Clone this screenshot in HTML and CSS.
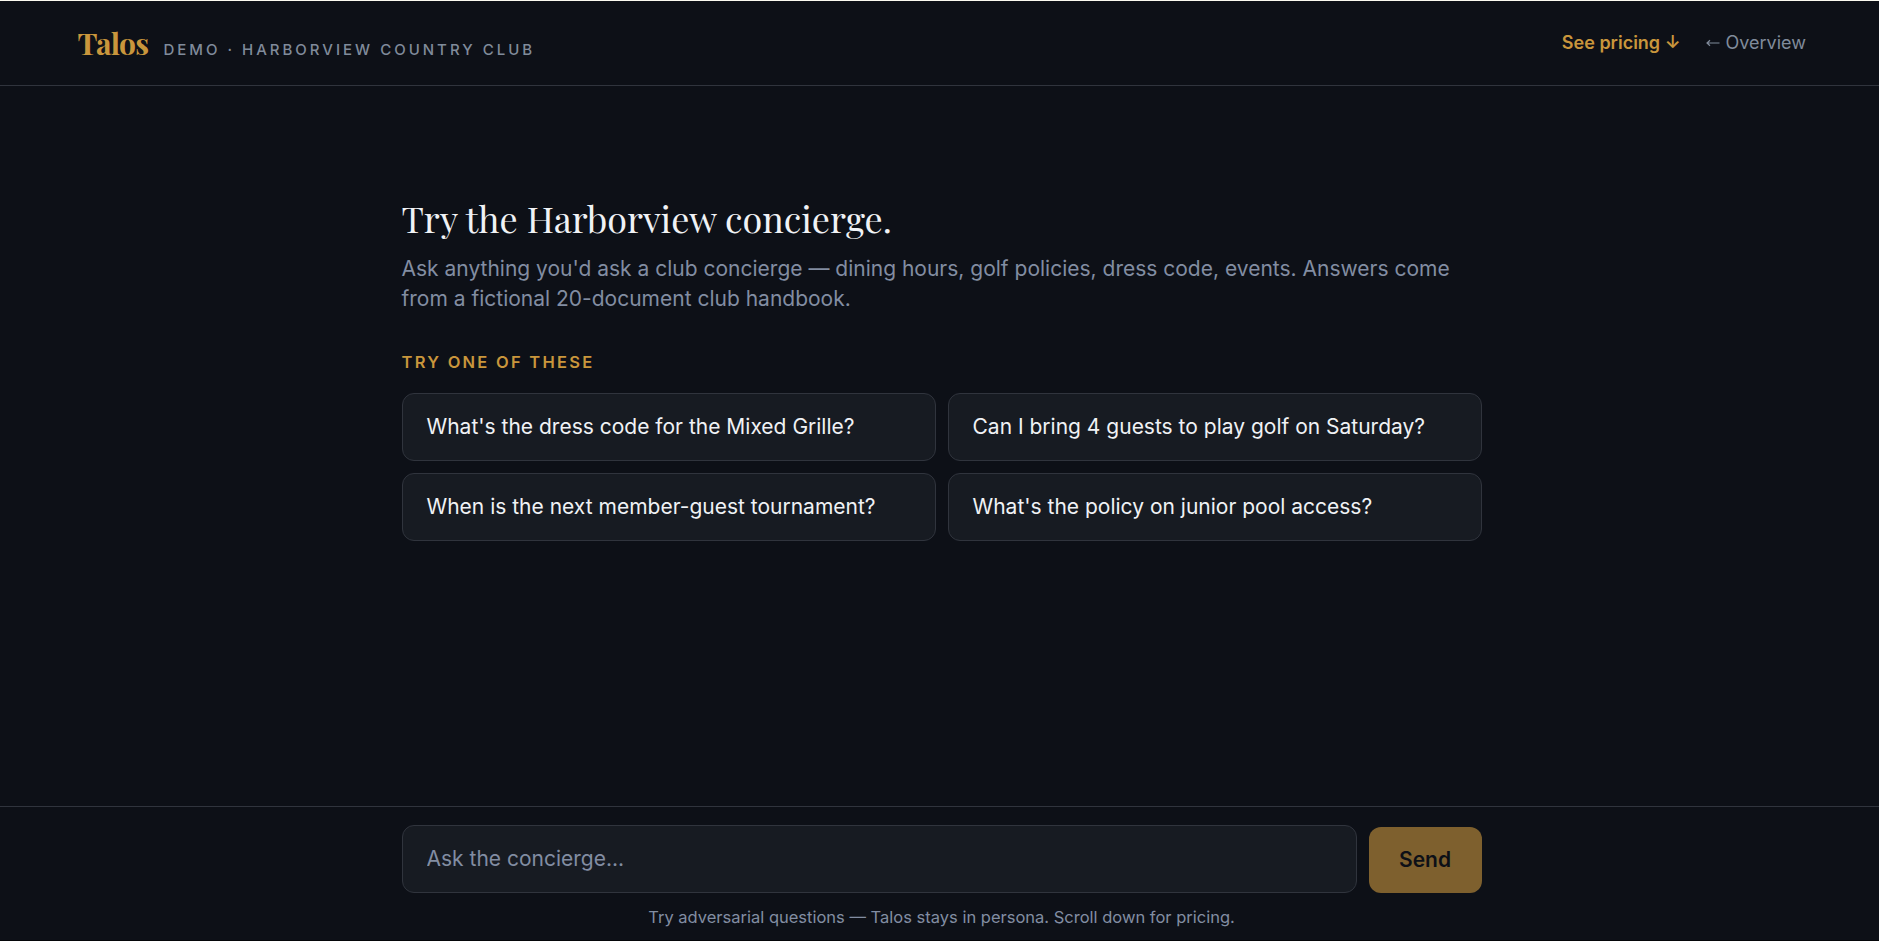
FILE: index.html
```html
<!DOCTYPE html>
<html lang="en">
<head>
<meta charset="utf-8">
<title>Talos Demo</title>
<link rel="stylesheet" href="styles.css">
</head>
<body>
<div class="app">
  <header class="header">
    <div class="brand">
      <span class="logo">Talos</span>
      <span class="tagline">DEMO · HARBORVIEW COUNTRY CLUB</span>
    </div>
    <nav class="nav">
      <a class="nav-pricing">See pricing ↓</a>
      <a class="nav-overview"><svg class="back" viewBox="0 0 14 8" width="14" height="8"><path d="M13.5 4H1M4 1.2L1 4l3 2.8" fill="none" stroke="currentColor" stroke-width="1.2"/></svg>Overview</a>
    </nav>
  </header>
  <main class="main">
    <div class="column">
      <h1 class="title">Try the Harborview concierge.</h1>
      <p class="intro">Ask anything you'd ask a club concierge — dining hours, golf policies, dress code, events. Answers come from a fictional 20-document club handbook.</p>
      <h2 class="label">TRY ONE OF THESE</h2>
      <div class="prompts">
        <button class="prompt">What's the dress code for the Mixed Grille?</button>
        <button class="prompt">Can I bring 4 guests to play golf on Saturday?</button>
        <button class="prompt">When is the next member-guest tournament?</button>
        <button class="prompt">What's the policy on junior pool access?</button>
      </div>
    </div>
  </main>
  <footer class="composer">
    <div class="column">
      <form class="form">
        <input class="input" type="text" placeholder="Ask the concierge...">
        <button class="send" type="button">Send</button>
      </form>
      <p class="hint">Try adversarial questions — Talos stays in persona. Scroll down for pricing.</p>
    </div>
  </footer>
</div>
</body>
</html>
```

FILE: styles.css
```css
* { box-sizing: border-box; margin: 0; padding: 0; }
body {
  background: #0d1017;
  color: #f0f2f5;
  font-family: Inter, "Liberation Sans", sans-serif;
}
.app {
  display: flex;
  flex-direction: column;
  height: 941px;
  border-top: 1px solid #fbfaf0;
  border-bottom: 1px solid #050609;
  overflow: hidden;
}
.header {
  display: flex;
  justify-content: space-between;
  align-items: center;
  height: 85px;
  padding: 0 73px 0 77.5px;
  border-bottom: 1px solid #30343d;
}
.brand { display: flex; align-items: baseline; gap: 15px; }
.logo {
  font: 700 30px/40px "Playfair Display", "Liberation Serif", serif;
  letter-spacing: -0.75px;
  color: #c9963c;
}
.tagline { font-size: 15px; font-weight: 500; letter-spacing: 3px; color: #808b9b; }
.nav { display: flex; align-items: center; gap: 25px; padding-bottom: 2px; font-size: 18px; }
.nav-pricing { font-weight: 600; color: #c9963c; }
.nav-overview { display: flex; align-items: center; gap: 6px; color: #808b9b; }
.back { margin-top: 1px; }
.main { flex: 1; padding: 107px 0 0 4px; }
.column { width: 1080px; margin: 0 auto; }
.title {
  font: 400 36px/50px "Playfair Display", "Liberation Serif", serif;
  white-space: nowrap;
}
.intro { margin-top: 11px; font-size: 21px; line-height: 30px; color: #828da2; }
.label { margin-top: 38px; font-size: 16.5px; line-height: 20px; font-weight: 600; letter-spacing: 2.25px; color: #c9963c; }
.prompts { display: grid; grid-template-columns: 1fr 1fr; gap: 12px; margin-top: 21px; }
.prompt {
  height: 68px;
  padding: 0 24px;
  border: 1px solid #30343d;
  border-radius: 12px;
  background: #171b22;
  color: #f0f2f5;
  font: 400 21px/30px Inter, sans-serif;
  text-align: left;
  white-space: nowrap;
}
.composer { height: 134px; padding: 18px 0 0 4px; border-top: 1px solid #30343d; }
.form { display: flex; align-items: flex-end; gap: 12px; }
.input {
  flex: 1;
  height: 68px;
  padding: 0 24px 1px;
  border: 1px solid #30343d;
  border-radius: 12px;
  background: #171b22;
  font: 400 21px/30px Inter, sans-serif;
}
.input::placeholder { color: #828da2; opacity: 1; }
.send {
  width: 113px;
  height: 66px;
  border: 0;
  border-radius: 12px;
  background: #7e602e;
  color: #0d1017;
  font: 600 21px/30px Inter, sans-serif;
}
.hint { margin-top: 14px; font-size: 16.5px; line-height: 20px; text-align: center; color: #828da2; }
```
